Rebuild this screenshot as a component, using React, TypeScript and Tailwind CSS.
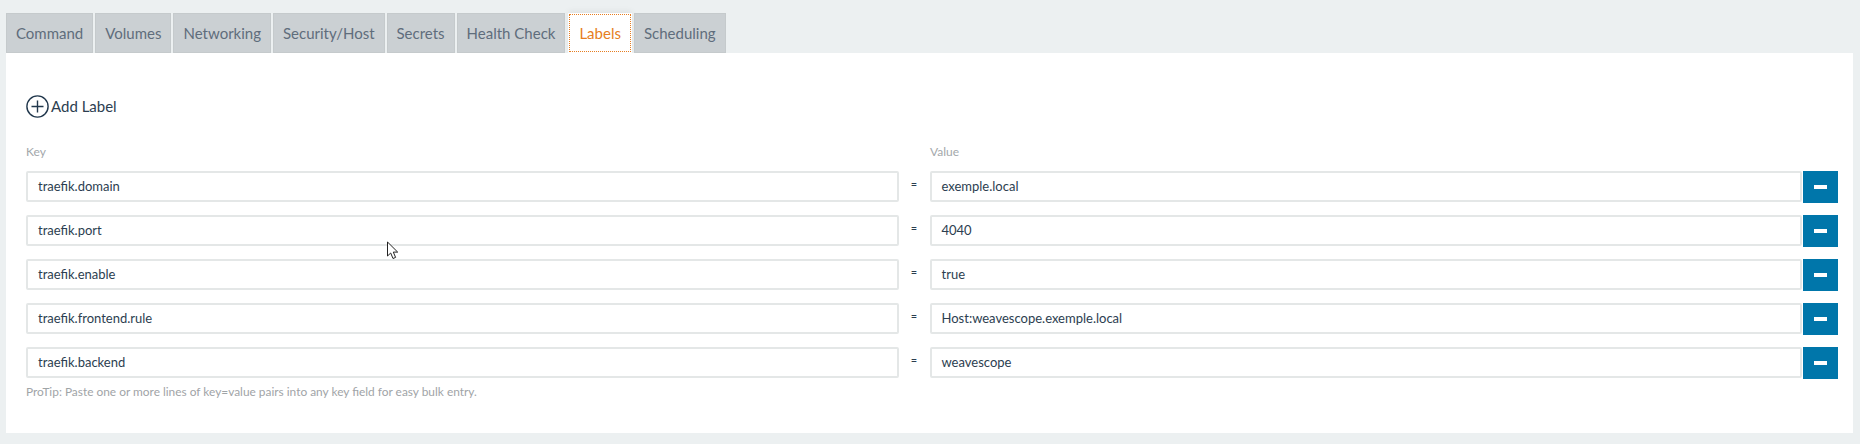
const tabs = ["Command", "Volumes", "Networking", "Security/Host", "Secrets", "Health Check", "Labels", "Scheduling"];

const labels = [
  { key: "traefik.domain", value: "exemple.local" },
  { key: "traefik.port", value: "4040" },
  { key: "traefik.enable", value: "true" },
  { key: "traefik.frontend.rule", value: "Host:weavescope.exemple.local" },
  { key: "traefik.backend", value: "weavescope" },
];

function Field({ text }: { text: string }) {
  return (
    <div className="flex-1 h-[31px] border-2 border-[#e4e7e7] rounded-[2px] bg-white pl-[10px] flex items-center text-[13px] text-[#2c3e50]">
      {text}
    </div>
  );
}

export default function App() {
  return (
    <div className="h-[444px] bg-[#ecf0f1] pt-[13px] px-[6px] font-['Lato','Open_Sans',sans-serif]">
      <div className="flex gap-[2px]">
        {tabs.map((t) =>
          t === "Labels" ? (
            <div key={t} className="h-[40px] px-[11px] ml-[1px] flex items-center text-[15px] text-[#e67e22] bg-white outline-1 outline-dotted outline-[#e67e22] -outline-offset-2 shadow-[0_-2px_6px_rgba(0,0,0,0.06)]">
              {t}
            </div>
          ) : (
            <div key={t} className="h-[40px] px-[9px] flex items-center text-[15px] text-[#5f6d7c] bg-[#cbd0d3] border border-[#c5cacc]">
              {t}
            </div>
          ),
        )}
      </div>

      <div className="relative bg-white w-[1847px] h-[380px] pl-[20px] pr-[15px] pt-[42px]">
        <div className="flex items-center gap-[2px] h-[23px] text-[15px] text-[#2c3e50]">
          <svg width="23" height="23" viewBox="0 0 23 23" fill="none" stroke="#22384d" strokeWidth="1.4">
            <circle cx="11.5" cy="11.5" r="10.6" />
            <path d="M11.5 5.5v12M5.5 11.5h12" />
          </svg>
          <span>Add Label</span>
        </div>

        <div className="flex mt-[27px] text-[12px] leading-[14px] text-[#a3a8ab]">
          <div className="w-[904px]">Key</div>
          <div>Value</div>
        </div>

        <div className="mt-[12px] flex flex-col gap-[13px]">
          {labels.map((l) => (
            <div key={l.key} className="flex items-center h-[31px]">
              <Field text={l.key} />
              <div className="w-[31px] text-center text-[11px] text-[#2c3e50] -mt-[4px]">=</div>
              <Field text={l.value} />
              <button className="ml-[1px] w-[35px] h-[32px] bg-[#0076aa] flex items-center justify-center">
                <span className="block w-[13px] h-[4px] bg-white" />
              </button>
            </div>
          ))}
        </div>

        <p className="mt-[7px] text-[11.9px] leading-[14px] text-[#9fa4a7]">
          ProTip: Paste one or more lines of key=value pairs into any key field for easy bulk entry.
        </p>

        {/* mouse pointer caught in the shot */}
        <svg className="absolute left-[380px] top-[188px]" width="14" height="20" viewBox="0 0 14 20" fill="#fff" stroke="#222" strokeWidth="1">
          <path d="M1.5 1v14l3.2-3 2.3 5.5 2.6-1.1-2.3-5.3h4.4z" />
        </svg>
      </div>
    </div>
  );
}
